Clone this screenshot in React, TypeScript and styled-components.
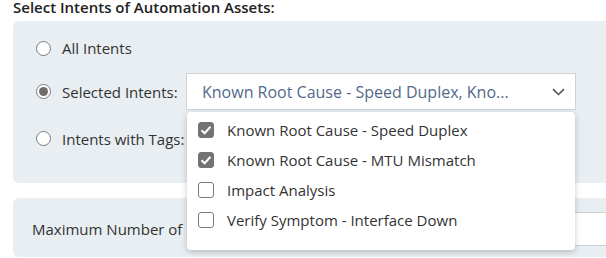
import styled, { createGlobalStyle } from 'styled-components';

const GlobalStyle = createGlobalStyle`
    html, body {
        margin: 0;
        padding: 0;
        background: #fff;
        overflow: hidden;
    }
    body {
        font-family: "Open Sans", "Liberation Sans", sans-serif;
        color: #333;
    }
`

const Page = styled.div`
    width: 740px;
    padding-left: 13px;
`

const Heading = styled.div`
    margin-top: -3px;
    font-size: 15px;
    line-height: 20px;
    font-weight: 600;
    color: #222;
`

const Panel = styled.div`
    margin-top: 4px;
    background: #e8eef2;
    border-radius: 6px;
    padding: 16px 24px 26px 23px;
    display: flex;
    flex-direction: column;
`

const LimitPanel = styled.div`
    margin-top: 15px;
    background: #e8eef2;
    border-radius: 6px;
    padding: 14px 19px 11px;
    display: flex;
    align-items: center;
`

const Row = styled.div<{ $gap: number; $height: number }>`
    display: flex;
    align-items: center;
    height: ${p => p.$height}px;
    margin-top: ${p => p.$gap}px;
`

const Radio = styled.span<{ $checked?: boolean }>`
    box-sizing: border-box;
    width: 15px;
    height: 15px;
    border-radius: 50%;
    border: 1px solid #7a7a7a;
    background: #fff;
    display: flex;
    align-items: center;
    justify-content: center;
    flex-shrink: 0;
    &::after {
        content: '';
        display: ${p => (p.$checked ? 'block' : 'none')};
        width: 9px;
        height: 9px;
        border-radius: 50%;
        background: #6e6e6e;
    }
`

const Label = styled.span<{ $width?: number }>`
    margin-left: 11px;
    font-size: 15px;
    line-height: 20px;
    color: #333;
    white-space: nowrap;
    width: ${p => (p.$width ? `${p.$width}px` : 'auto')};
`

const SelectWrap = styled.div`
    position: relative;
    width: 390px;
    height: 37px;
`

const SelectBox = styled.div`
    box-sizing: border-box;
    height: 100%;
    border: 1px solid #cfd2d4;
    background: #fff;
    display: flex;
    align-items: center;
    justify-content: space-between;
    padding: 0 10px 0 15px;
    font-size: 16px;
    color: #54698a;
    white-space: nowrap;
`

const Menu = styled.div`
    position: absolute;
    top: calc(100% + 2px);
    left: 1px;
    right: 1px;
    height: 138px;
    box-sizing: border-box;
    background: #fff;
    border-radius: 4px;
    box-shadow: 0 2px 6px rgba(0, 0, 0, 0.22);
    padding: 3px 0 15px;
    z-index: 10;
`

const Option = styled.div`
    height: 30px;
    display: flex;
    align-items: center;
    padding-left: 11px;
    font-size: 15px;
    color: #333;
`

const Check = styled.span<{ $checked?: boolean }>`
    box-sizing: border-box;
    width: 16px;
    height: 16px;
    border-radius: 3px;
    border: 1px solid ${p => (p.$checked ? '#737373' : '#7a7a7a')};
    background: ${p => (p.$checked ? '#737373' : '#fff')};
    display: flex;
    align-items: center;
    justify-content: center;
    margin-right: 13px;
    flex-shrink: 0;
`

const LimitLabel = styled.span`
    font-size: 15px;
    color: #333;
    white-space: nowrap;
`

const NumberInput = styled.div`
    margin-left: 150px;
    width: 400px;
    height: 34px;
    box-sizing: border-box;
    border: 1px solid #cfd2d4;
    background: #fff;
`

const options = [
    { name: 'Known Root Cause - Speed Duplex', checked: true },
    { name: 'Known Root Cause - MTU Mismatch', checked: true },
    { name: 'Impact Analysis', checked: false },
    { name: 'Verify Symptom - Interface Down', checked: false },
]

const Chevron = () => (
    <svg width="13" height="8" viewBox="0 0 13 8">
        <path d="M1 1.2 L6.5 6.5 L12 1.2" fill="none" stroke="#555" strokeWidth="1.6" />
    </svg>
)

const Tick = () => (
    <svg width="12" height="10" viewBox="0 0 12 10">
        <path d="M1.5 5.2 L4.6 8.2 L10.5 1.8" fill="none" stroke="#fff" strokeWidth="2" />
    </svg>
)

const App = () => {
    return (
        <Page>
            <GlobalStyle />
            <Heading>Select Intents of Automation Assets:</Heading>
            <Panel>
                <Row $gap={0} $height={22}>
                    <Radio />
                    <Label>All Intents</Label>
                </Row>
                <Row $gap={14} $height={37}>
                    <Radio $checked />
                    <Label $width={124}>Selected Intents:</Label>
                    <SelectWrap>
                        <SelectBox>
                            <span>Known Root Cause - Speed Duplex, Kno...</span>
                            <Chevron />
                        </SelectBox>
                        <Menu>
                            {options.map(o => (
                                <Option key={o.name}>
                                    <Check $checked={o.checked}>{o.checked && <Tick />}</Check>
                                    {o.name}
                                </Option>
                            ))}
                        </Menu>
                    </SelectWrap>
                </Row>
                <Row $gap={10} $height={37}>
                    <Radio />
                    <Label>Intents with Tags:</Label>
                </Row>
            </Panel>
            <LimitPanel>
                <LimitLabel>Maximum Number of</LimitLabel>
                <NumberInput />
            </LimitPanel>
        </Page>
    )
}

export default App;
